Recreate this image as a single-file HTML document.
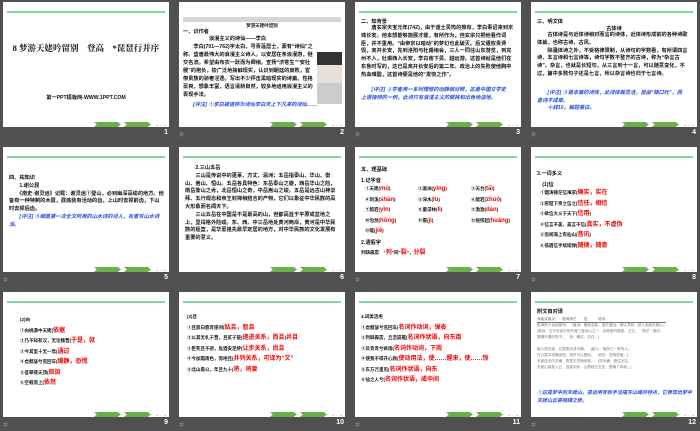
<!DOCTYPE html>
<html><head><meta charset="utf-8"><style>
*{margin:0;padding:0;box-sizing:border-box}
body{width:700px;height:431px;background:#505050;position:relative;overflow:hidden;font-family:"Liberation Sans","Noto Sans CJK SC",sans-serif}
.s{position:absolute;width:166px;height:125px;background:#fff;overflow:hidden}
.gl{position:absolute;left:4px;right:4px;top:9px;height:1.5px;background:#7fd6a2}
.b1,.b2{position:absolute;top:120px;width:27px;height:5px;background:#6ab04c;clip-path:polygon(0 0,88% 0,100% 50%,88% 100%,0 100%,10% 50%)}
.b1{left:91px}.b2{left:121px}
.dots{position:absolute;left:153px;top:121px;font-size:3px;color:#999;letter-spacing:1px}
.n{position:absolute;color:#fff;font-size:7px;font-weight:bold;text-align:right;width:20px}
.ic{position:absolute;color:#ddd;font-size:5px}
.t{position:absolute;font-size:5.2px;line-height:8.3px;color:#111;font-weight:bold}
.bl{color:#2a4fd6;font-style:italic}
.r{color:#e00;font-weight:bold;font-size:6px}
.g{position:absolute;left:10px;top:38px;width:156px;font-size:4.5px;font-weight:bold;color:#111;display:grid;grid-template-columns:53px 53px 50px;row-gap:2.5px;line-height:8px}
</style></head><body>

<!-- Row 1 -->
<div class="s" style="left:3px;top:2px"><div class="gl"></div>
<div class="t" style="left:0;width:166px;top:42px;text-align:center;font-size:8.5px;font-family:'Liberation Serif','Noto Serif CJK SC',serif">8 梦游天姥吟留别　登高　*琵琶行并序</div>
<div class="t" style="left:0;width:166px;top:92px;text-align:center;font-size:5.2px">第一PPT模板网-WWW.1PPT.COM</div>
<div class="b1"></div><div class="b2"></div><div class="dots">◂ ▪ ▸</div></div>

<div class="s" style="left:179px;top:2px">
<div style="position:absolute;left:4px;right:4px;top:15px;height:5px;background:#d6d6d6"></div>
<div class="t" style="left:0;width:166px;top:20px;text-align:center;font-size:4.5px">梦游天姥吟留别</div>
<div class="t" style="left:4px;top:26px">一、识作者</div>
<div class="t" style="left:4px;top:33px;width:132px;line-height:8px">　　　　　浪漫主义的诗仙——李白<br>　　李白(701—762)字太白，号青莲居士，素有“诗仙”之称。盛唐最伟大的浪漫主义诗人。以安居在条浪漫游，继交名流。希望由布衣一跃而为卿相。宣扬“济苍生”“安社稷”的抱负，较广泛地接触现实，认识到朝廷的腐败，官僚贵族的骄奢淫逸。写出不少抨击黑暗现实的诗篇。性格豪爽，想象丰富，语言清新自然，较多地运用浪漫主义的表现手法。</div>
<div style="position:absolute;left:138px;top:50px;width:25px;height:52px;background:linear-gradient(#333 0 25%,#e8e0d8 25% 60%,#ccc 60%)"></div>
<div class="t bl" style="left:14px;top:100px;width:140px;line-height:7px">[评注] ①李白被道称为诗仙李白天上下凡来的诗仙……</div>
<div class="b1"></div><div class="b2"></div><div class="dots">◂ ▪ ▸</div></div>

<div class="s" style="left:355px;top:2px"><div class="gl"></div>
<div class="t" style="left:6px;top:16px">二、知背景</div>
<div class="t" style="left:6px;top:23px;width:155px;line-height:7.8px">　　唐玄宗天宝元年(742)，由于道士吴筠的推荐，李白奉诏来到京城长安。他本想能够施展才能，有所作为，但玄宗只把他看作词臣，并不重用。“由帝京以暗动”的梦幻也此破灭。后又遭权贵谗毁，离开长安，先到洛阳与杜甫相会，三人一同往山东游览，到充州不入，杜甫西入长安，李白南下吴、越远游。这首诗就是他们在东鲁时写的，这已是离开长安后的第二年。政治上的失败使他胸中热血难酸，这首诗便是他的“发愤之作”。</div>
<div class="t bl" style="left:6px;top:85px;width:150px;line-height:7.5px">　　[评注] ②学者用一系列理想的动静相对照，这是中国文学史上很独特的一例，此诗只有浪漫主义的赋格和出色地适地。</div>
<div class="b1"></div><div class="b2"></div><div class="dots">◂ ▪ ▸</div></div>

<div class="s" style="left:531px;top:2px"><div class="gl"></div>
<div class="t" style="left:6px;top:16px">三、明文体</div>
<div class="t" style="left:0;width:166px;top:23px;text-align:center">古体诗</div>
<div class="t" style="left:6px;top:30px;width:155px;line-height:7.8px">　　古体诗是与近体诗相对而言的诗体，近体诗形成前的各种诗歌体裁，也称古诗、古风。<br>　　除骚体诗之外，不受格律限制，从诗句的字数看，有所谓四言诗、五言诗和七言诗等，诗句字数不整齐的古诗，称为“杂言古诗”。杂言，也就是长短句，从三言到十一言，可以随意变化，不过，篇中多数句子还是七言，所以杂言诗也归于七言诗。</div>
<div class="t bl" style="left:6px;top:88px;width:150px;line-height:7.5px">　　[评注] ③是本篇的诗体，此诗体裁灵活，自由“随口吐”，而是诗不成章。<br>　　④辞10，解题看白。</div>
<div class="b1"></div><div class="b2"></div><div class="dots">◂ ▪ ▸</div></div>

<!-- Row 2 -->
<div class="s" style="left:3px;top:147px"><div class="gl"></div>
<div class="t" style="left:6px;top:28px;width:155px;line-height:7.8px">四、拓知识<br>　　1.谢公屐<br>　　《南史·谢灵运》记载：谢灵运①登山，必到幽深高峻的地方。他备有一种特制的木屐，屐底装有活动的齿，上山时去掉前齿，下山时去掉后齿。</div>
<div class="t bl" style="left:6px;top:67px;width:155px;line-height:7.5px">　　[评注] ⑤细是第一次全文所用的山水诗的诗人，有着写山水诗派。</div>
<div class="b1"></div><div class="b2"></div><div class="dots">◂ ▪ ▸</div></div>

<div class="s" style="left:179px;top:147px"><div class="gl"></div>
<div class="t" style="left:6px;top:18px;width:155px;line-height:7.8px">　　2.三山五岳<br>　　三山是传说中的蓬莱、方丈、瀛洲；五岳指泰山、华山、衡山、嵩山、恒山。五岳各具特色：东岳泰山之雄，西岳华山之险，南岳衡山之秀，北岳恒山之奇，中岳嵩山之峻。五岳是远古山神崇拜、五行观念和帝王封禅相结合的产物，它们以象征中华民族的高大形象而名闻天下。<br>　　三山五岳在中国是不是最高的山，但都高耸于平原或盆地之上，显得格外险峻。东、西、中三岳地处黄河两岸，黄河是中华民族的摇篮，是华夏祖先最早定居的地方，对中华民族的文化发展有重要的意义。</div>
<div class="b1"></div><div class="b2"></div><div class="dots">◂ ▪ ▸</div></div>

<div class="s" style="left:355px;top:147px"><div class="gl"></div>
<div class="t" style="left:6px;top:18px;line-height:10.5px">五、理基础<br>1.记字音</div>
<div class="g">
<div>①天姥(<span class="r">mǔ</span>)</div><div>②瀛洲(<span class="r">yíng</span>)</div><div>③天台(<span class="r">tāi</span>)</div>
<div>④剡溪(<span class="r">shàn</span>)</div><div>⑤渌水(<span class="r">lù</span>)</div><div>⑥殷岩(<span class="r">zhuó</span>)</div>
<div>⑦殷岩(<span class="r">yǐn</span>)</div><div>⑧栗深林(<span class="r">lì</span>)</div><div>⑨澹澹(<span class="r">dàn</span>)</div>
<div>⑩訇然(<span class="r">hōng</span>)</div><div>⑪覆(<span class="r">jì</span>)</div><div>⑫恍惊起(<span class="r">huǎng</span>)</div>
<div>⑬嗟(<span class="r">jiē</span>)</div></div>
<div class="t" style="left:6px;top:92px">2.通假字</div>
<div class="t" style="left:6px;top:102px;font-size:4.5px">列缺霹雳　“<span class="r">列</span>”同“<span class="r">裂</span>”，<span class="r">分裂</span></div>
<div class="b1"></div><div class="b2"></div><div class="dots">◂ ▪ ▸</div></div>

<div class="s" style="left:531px;top:147px"><div class="gl"></div>
<div class="t" style="left:6px;top:22px;line-height:10.5px">3.一词多义<br>　(1)信</div>
<div class="t" style="left:9px;top:41px;width:160px;line-height:10.5px;font-size:4.5px">
①烟涛微茫信难求(<span class="r">确实，实在</span><br>
②愿陛下亲之信之(<span class="r">信任，相信</span><br>
③欲信大义于天下(<span class="r">信用</span>)<br>
④信言不美，美言不信(<span class="r">真实，不虚伪</span><br>
⑤忽闻海上有仙山(<span class="r">音讯</span>)<br>
⑥低眉信手续续弹(<span class="r">随便，随意</span></div>
<div class="b1"></div><div class="b2"></div><div class="dots">◂ ▪ ▸</div></div>

<!-- Row 3 -->
<div class="s" style="left:3px;top:292px"><div class="gl"></div>
<div class="t" style="left:17px;top:23px;width:150px;line-height:10.5px;font-size:4.5px">(2)向<br>
①向桃源中天姥(<span class="r">依据</span><br>
②乃不知有汉，无论魏晋(<span class="r">于是，就</span><br>
③今其室十无一焉(<span class="r">通过</span><br>
④虎鼓瑟兮鸾回车(<span class="r">细静，恐慌</span><br>
⑤吾攀接天顶(<span class="r">原因</span><br>
⑥空载而上(<span class="r">依然</span></div>
<div class="b1"></div><div class="b2"></div><div class="dots">◂ ▪ ▸</div></div>

<div class="s" style="left:179px;top:292px"><div class="gl"></div>
<div class="t" style="left:8px;top:20px;width:158px;line-height:10.5px;font-size:4.5px">(3)且<br>
①且放白鹿青崖间(<span class="r">姑且，暂且</span><br>
②以其无礼于晋，且贰于楚(<span class="r">递进关系，而且</span>)<span class="r">并且</span><br>
③臣死且不避，卮酒安足辞(<span class="r">让步关系，尚且</span><br>
④今加霜雨色，而地且(<span class="r">并列关系，可译为“又”</span><br>
⑤北山愚公，年且九十(<span class="r">将，将要</span></div>
<div class="b1"></div><div class="b2"></div><div class="dots">◂ ▪ ▸</div></div>

<div class="s" style="left:355px;top:292px"><div class="gl"></div>
<div class="t" style="left:6px;top:20px;width:160px;line-height:10.5px;font-size:4.5px">4.词类活用<br>
①虎鼓瑟兮鸾回车(<span class="r">名词作动词，弹奏</span><br>
②列缺霹雳，丘峦崩摧(<span class="r">名词作状语，向东南</span><br>
③云青青兮欲雨(<span class="r">名词作动词，下雨</span><br>
④使我不得开心颜(<span class="r">使动用法，使……醒来，使……惊</span><br>
⑤东方万里见(<span class="r">名词作状语，向东</span><br>
⑥仙之人兮(<span class="r">名词作状语，成中间</span></div>
<div class="b1"></div><div class="b2"></div><div class="dots">◂ ▪ ▸</div></div>

<div class="s" style="left:531px;top:292px"><div class="gl"></div>
<div class="t" style="left:6px;top:16px">附文自对译</div>
<div class="t" style="left:6px;top:24px;width:155px;font-size:3.6px;line-height:6px;color:#777;font-weight:normal">
海客谈瀛洲，　烟涛微茫　　信　　　难求。<br>
<span style="border-top:0.5px solid #777">航海的人谈起瀛洲，（瀛洲）烟波浩淼，迷茫遥远，难以寻到；越人谈起天姥山，</span><br>
[瀛洲：古代传说中的东海三座仙山之一，另两座叫蓬莱、方丈。　微茫：隐约，<br>
模糊不清的样子。　信：确实，实在。]<br><br>
越人语天姥，云霞明灭或可睹。　[越人：指浙江一带的人。<br>
在云霞中或隐或现，或许可以看到。　明灭：忽明忽暗。]<br>
天姥连天向天横，势拔五岳掩赤城。　[向天横：遮住天空。<br>
天姥山高耸入云，连接天际，山势超过五岳，遮掩了赤城。]</div>
<div class="t bl" style="left:6px;top:97px;width:156px;line-height:8px;font-size:5px">①这是梦中的天姥山，是运用夸张手法描写山峰的特点，它表现出梦中天姥山云雾磅礴之势。</div>
<div class="b1"></div><div class="b2"></div><div class="dots">◂ ▪ ▸</div></div>

<!-- numbers -->
<div class="n" style="left:148px;top:129px">1</div><div class="n" style="left:324px;top:129px">2</div><div class="n" style="left:500px;top:129px">3</div><div class="n" style="left:676px;top:129px">4</div>
<div class="n" style="left:148px;top:274px">5</div><div class="n" style="left:324px;top:274px">6</div><div class="n" style="left:500px;top:274px">7</div><div class="n" style="left:676px;top:274px">8</div>
<div class="n" style="left:148px;top:419px">9</div><div class="n" style="left:324px;top:419px">10</div><div class="n" style="left:500px;top:419px">11</div><div class="n" style="left:676px;top:419px">12</div>
<div class="ic" style="left:179px;top:131px">☆</div><div class="ic" style="left:355px;top:131px">☆</div><div class="ic" style="left:531px;top:131px">☆</div>
<div class="ic" style="left:3px;top:276px">☆</div><div class="ic" style="left:355px;top:276px">☆</div><div class="ic" style="left:531px;top:276px">☆</div>
<div class="ic" style="left:3px;top:421px">☆</div><div class="ic" style="left:179px;top:421px">☆</div><div class="ic" style="left:355px;top:421px">☆</div><div class="ic" style="left:531px;top:421px">☆</div>
</body></html>
